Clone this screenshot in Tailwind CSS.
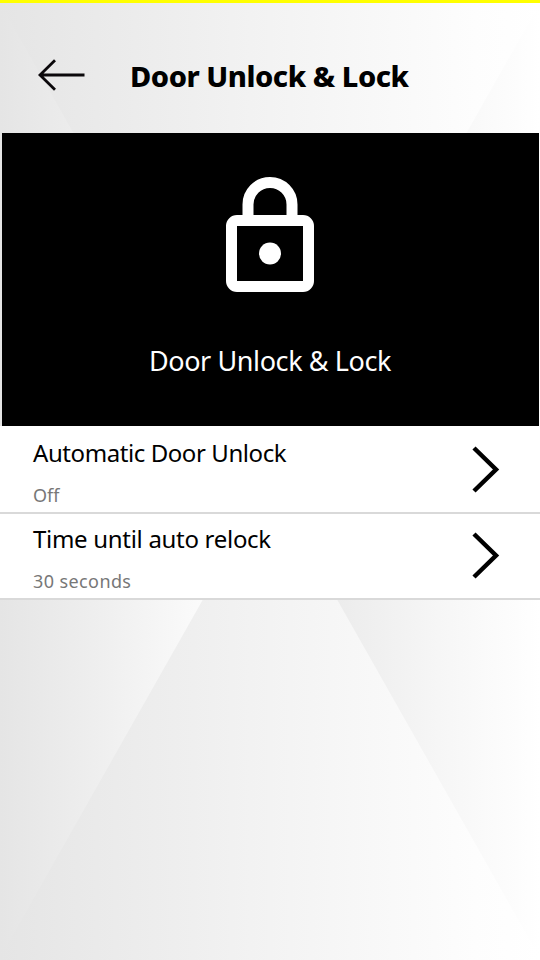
<!DOCTYPE html>
<html lang="en">
<head>
<meta charset="utf-8">
<title>Door Unlock &amp; Lock</title>
<script src="https://cdn.jsdelivr.net/npm/@tailwindcss/browser@4"></script>
</head>
<body class="w-[540px] h-[960px] overflow-hidden font-['Noto_Sans','Open_Sans',sans-serif] text-black">
<main class="relative isolate flex flex-col h-full border-t-3 border-[#ffff00]">
  <svg class="absolute inset-x-0 top-0 -z-10" width="540" height="957" viewBox="0 3 540 957">
    <defs>
      <linearGradient id="base" gradientUnits="userSpaceOnUse" x1="0" y1="0" x2="540" y2="0"><stop stop-color="#e5e5e5"/><stop offset=".5" stop-color="#f3f3f3"/><stop offset=".88" stop-color="#fdfdfd"/><stop offset="1" stop-color="#fff"/></linearGradient>
      <linearGradient id="left" gradientUnits="userSpaceOnUse" x1="0" y1="0" x2="204" y2="0"><stop stop-color="#e5e5e5"/><stop offset=".5" stop-color="#efefef"/><stop offset="1" stop-color="#fbfbfb"/></linearGradient>
      <linearGradient id="right" gradientUnits="userSpaceOnUse" x1="337" y1="0" x2="540" y2="0"><stop stop-color="#ececec"/><stop offset=".5" stop-color="#f6f6f6"/><stop offset="1" stop-color="#fff"/></linearGradient>
    </defs>
    <path fill="url(#base)" d="M0 0H540V960H0z"/>
    <path fill="url(#left)" d="M0 3 270 481 0 958z"/>
    <path fill="url(#right)" d="M540 3 270 481 540 958z"/>
  </svg>

  <header class="flex items-center h-[130px] pl-[37px] pt-4">
    <svg class="-mt-0.5" width="48" height="34" viewBox="0 0 48 34" fill="none" stroke="#0b080b" stroke-width="2.8"><path d="M47.5 17H3M18 2.2 3 17 18 31.8"/></svg>
    <h1 class="ml-[45px] text-[29px] leading-9 font-extrabold whitespace-nowrap tracking-[-0.45px]">Door Unlock &amp; Lock</h1>
  </header>

  <section class="flex flex-col items-center mx-[1.5px] h-[293px] bg-black text-white pt-[44px]">
    <svg width="90" height="116" viewBox="0 0 90 116" fill="none" stroke="#fff" stroke-width="11">
      <path d="M23 39V27.5a22 22 0 0 1 44 0V39"/>
      <path fill="#fff" fill-rule="evenodd" stroke="none" d="M12 38H78a11 11 0 0 1 11 11V104a11 11 0 0 1-11 11H12A11 11 0 0 1 1 104V49A11 11 0 0 1 12 38zM12 49V104H78V49z"/>
      <circle cx="45" cy="76.5" r="11" fill="#fff" stroke="none"/>
    </svg>
    <p class="mt-[50px] text-[27px] leading-9 whitespace-nowrap tracking-[-0.4px]">Door Unlock &amp; Lock</p>
  </section>

  <ul>
    <li class="flex justify-between h-[88px] bg-white border-b-2 border-[#d9d9d9] pl-[33px] pr-10">
      <div class="flex flex-col pt-[11px]">
        <span class="text-[24px] leading-8 whitespace-nowrap tracking-[-0.42px]">Automatic Door Unlock</span>
        <span class="mt-[14px] text-[18px] leading-6 text-[#777]">Off</span>
      </div>
      <svg class="mt-[20px]" width="28" height="48" viewBox="0 0 28 48" fill="none" stroke="#000" stroke-width="4.5"><path d="M2 2 24 23.5 2 45"/></svg>
    </li>
    <li class="flex justify-between h-[86px] bg-white border-b-2 border-[#d9d9d9] pl-[33px] pr-10">
      <div class="flex flex-col pt-[9px]">
        <span class="text-[24px] leading-8 whitespace-nowrap tracking-[-0.3px]">Time until auto relock</span>
        <span class="mt-[14px] text-[18px] leading-6 text-[#777] tracking-[0.4px]">30 seconds</span>
      </div>
      <svg class="mt-[18px]" width="28" height="48" viewBox="0 0 28 48" fill="none" stroke="#000" stroke-width="4.5"><path d="M2 2 24 23.5 2 45"/></svg>
    </li>
  </ul>
</main>
</body>
</html>
